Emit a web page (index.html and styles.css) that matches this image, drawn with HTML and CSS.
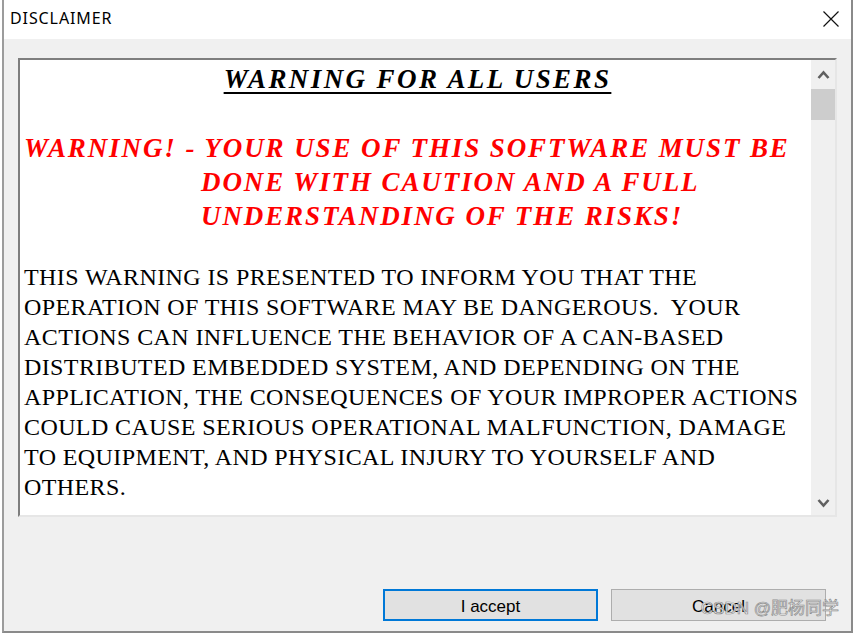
FILE: index.html
```html
<!DOCTYPE html>
<html lang="en">
<head>
  <meta charset="UTF-8" />
  <title>DISCLAIMER</title>
  <link rel="stylesheet" href="styles.css">
</head>
<body>
  <div class="window">
    <div class="titlebar">
      <span class="title">DISCLAIMER</span>
      <svg class="close" viewBox="0 0 16 16" width="16" height="16">
        <path d="M0.5 0.5 L15.5 15.5 M15.5 0.5 L0.5 15.5" />
      </svg>
    </div>

    <div class="client">
      <div class="textbox">
        <div class="content">
          <p class="heading"><span class="uline">WARNING FOR ALL USERS</span></p>
          <p class="alert">WARNING! - YOUR USE OF THIS SOFTWARE MUST BE<br>DONE WITH CAUTION AND A FULL<br>UNDERSTANDING OF THE RISKS!</p>
          <p class="body-text">THIS WARNING IS PRESENTED TO INFORM YOU THAT THE<br>OPERATION OF THIS SOFTWARE MAY BE DANGEROUS.&nbsp; YOUR<br>ACTIONS CAN INFLUENCE THE BEHAVIOR OF A CAN-BASED<br>DISTRIBUTED EMBEDDED SYSTEM, AND DEPENDING ON THE<br>APPLICATION, THE CONSEQUENCES OF YOUR IMPROPER ACTIONS<br>COULD CAUSE SERIOUS OPERATIONAL MALFUNCTION, DAMAGE<br>TO EQUIPMENT, AND PHYSICAL INJURY TO YOURSELF AND<br>OTHERS.</p>
        </div>
        <div class="scrollbar">
          <div class="arrow">
            <svg viewBox="0 0 13 12" width="13" height="12"><path d="M1.5 9 L6.5 3.5 L11.5 9" /></svg>
          </div>
          <div class="thumb"></div>
          <div class="track"></div>
          <div class="arrow down">
            <svg viewBox="0 0 13 12" width="13" height="12"><path d="M1.5 3 L6.5 8.5 L11.5 3" /></svg>
          </div>
        </div>
      </div>

      <div class="buttons">
        <button class="btn default">I accept</button>
        <button class="btn">Cancel</button>
      </div>
      <div class="watermark">CSDN @肥杨同学</div>
    </div>
  </div>
</body>
</html>
```

FILE: styles.css
```css
body {
  margin: 0;
  background: #ffffff;
  overflow: hidden;
}
.window {
  position: relative;
  margin-left: 2px;
  width: 847px;
  border-left: 2px solid #9c9c9c;
  border-right: 2px solid #8a8a8a;
  border-bottom: 2px solid #8a8a8a;
}
.titlebar {
  height: 39px;
  background: #ffffff;
  display: flex;
  align-items: center;
  justify-content: space-between;
  padding: 0 12px 0 6px;
}
.title {
  font-family: "Noto Sans", "DejaVu Sans", sans-serif;
  font-size: 16px;
  letter-spacing: 0.9px;
  color: #000;
  margin-top: -3px;
}
.close {
  margin-top: -2px;
}
.close path {
  stroke: #111;
  stroke-width: 1.2;
  fill: none;
}
.client {
  background: #f0f0f0;
  padding: 19px 25px 10px 14px;
}
.textbox {
  display: flex;
  width: 815px;
  height: 455px;
  border: 2px solid;
  border-color: #7e7e7e #e6e6e6 #e6e6e6 #7e7e7e;
  background: #ffffff;
}
.content {
  flex: 1;
  padding-left: 4px;
  font-family: "Liberation Serif", "Times New Roman", serif;
  white-space: nowrap;
  overflow: hidden;
}
.content p {
  margin: 0;
}
.heading {
  margin-top: 2px !important;
  text-align: center;
  font-size: 27px;
  line-height: 34px;
  font-weight: bold;
  font-style: italic;
  letter-spacing: 2.4px;
  color: #000;
}
.uline {
  text-decoration: underline;
  text-decoration-thickness: 2px;
  text-underline-offset: 4px;
}
.alert {
  margin-top: 35px !important;
  padding-left: 177px;
  text-indent: -177px;
  font-size: 27px;
  line-height: 34px;
  font-weight: bold;
  font-style: italic;
  letter-spacing: 1.9px;
  color: #ff0000;
}
.body-text {
  margin-top: 29px !important;
  font-size: 24px;
  line-height: 30px;
  letter-spacing: 0.4px;
  color: #000;
}
.scrollbar {
  width: 24px;
  display: flex;
  flex-direction: column;
  background: #f0f0f0;
}
.arrow {
  height: 29px;
  display: flex;
  align-items: center;
  justify-content: center;
}
.arrow.down {
  padding-top: 4px;
  height: 25px;
}
.arrow path {
  stroke: #606060;
  stroke-width: 2.6;
  fill: none;
}
.thumb {
  height: 31px;
  background: #cdcdcd;
}
.track {
  flex: 1;
}
.buttons {
  display: flex;
  justify-content: flex-end;
  gap: 13px;
  margin-top: 72px;
}
.btn {
  width: 215px;
  height: 32px;
  background: #e1e1e1;
  border: 1px solid #adadad;
  font-family: "Liberation Sans", Arial, sans-serif;
  font-size: 17px;
  color: #000;
  padding: 3px 0 0 0;
}
.btn.default {
  border: 2px solid #0078d7;
}
.watermark {
  position: absolute;
  right: 12px;
  bottom: 12px;
  font-family: "Liberation Sans", "Noto Sans CJK SC", sans-serif;
  font-size: 17px;
  color: rgba(255, 255, 255, 0.8);
  -webkit-text-stroke: 0.7px #8c8c8c;
}
```
